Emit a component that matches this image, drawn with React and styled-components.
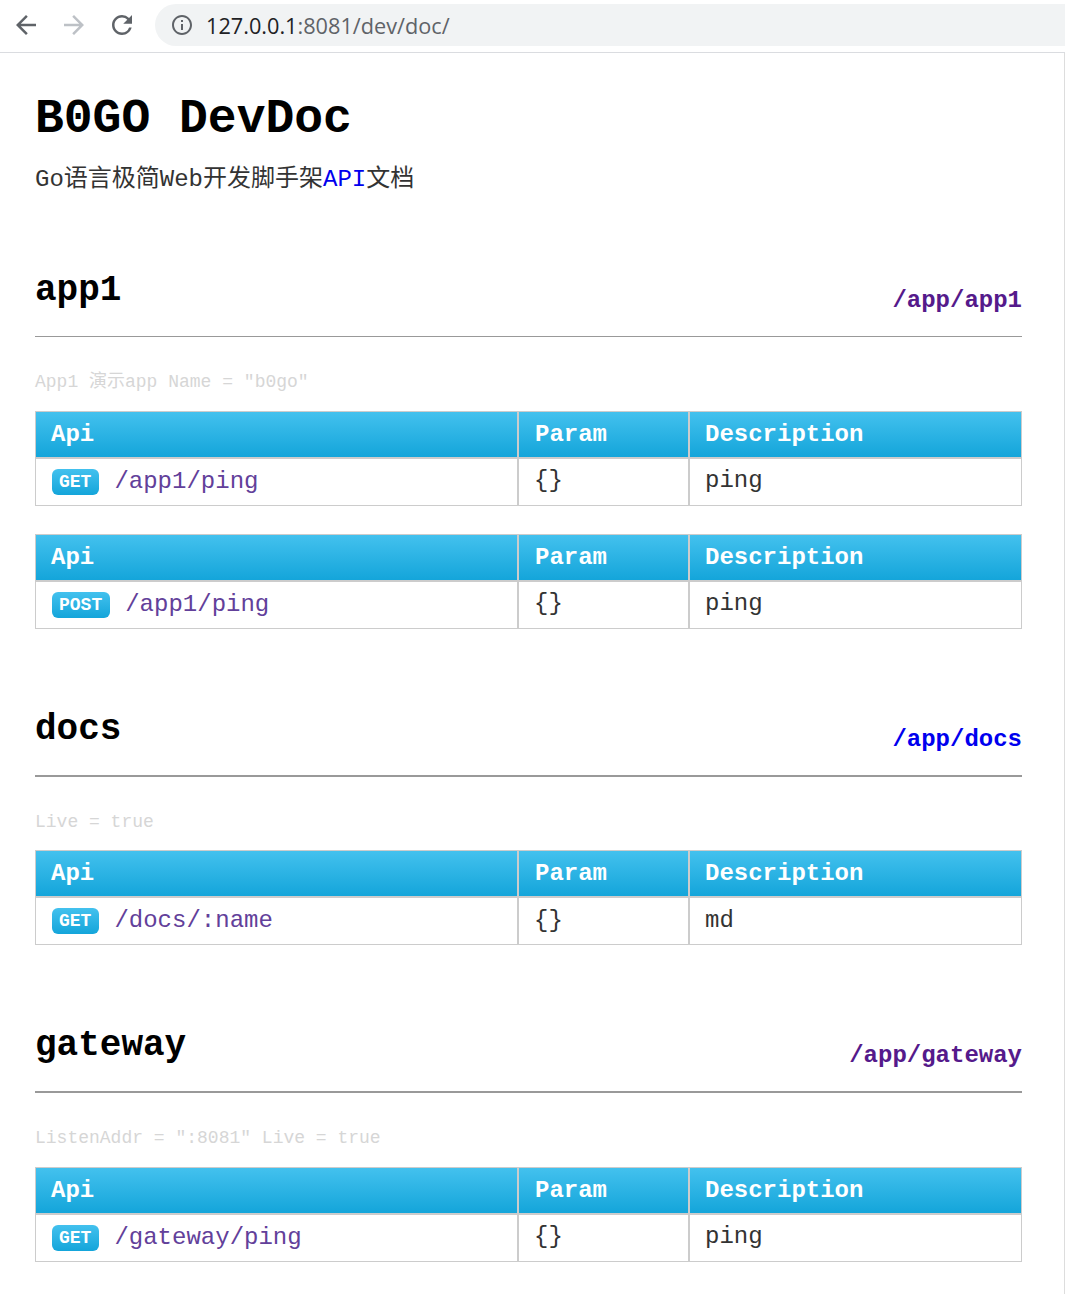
import React from "react";
import styled, { createGlobalStyle } from "styled-components";
import { MdArrowBack, MdArrowForward, MdRefresh, MdInfoOutline } from "react-icons/md";

const Global = createGlobalStyle`
html, body {
  margin: 0;
  padding: 0;
  background: #fff;
}
body {
  font-family: "Liberation Mono", "Noto Sans CJK SC", monospace;
}
`

const Toolbar = styled.header`
box-sizing: border-box;
height: 53px;
padding-top: 4px;
border-bottom: 1px solid #dadce0;
display: flex;
align-items: flex-start;
background: #fff;
`

const NavIcon = styled.span`
width: 48px;
height: 42px;
display: flex;
align-items: center;
justify-content: center;
color: ${props => props.$dim ? "#bdc1c6" : "#5f6368"};
font-size: 30px;
`

const NavGroup = styled.div`
display: flex;
padding-left: 2px;
margin-right: 9px;
`

const Omnibox = styled.div`
flex: 1;
height: 42px;
background: #f1f3f4;
border-radius: 21px 0 0 21px;
display: flex;
align-items: center;
padding-left: 15px;
gap: 12px;
color: #5f6368;
font-size: 24px;
`

const Url = styled.span`
font-family: "Open Sans", sans-serif;
font-size: 21.7px;
color: #5f6368;
b {
  font-weight: 400;
  color: #202124;
}
`

const Page = styled.main`
border-right: 1px solid #ddd;
padding: 39px 42px 32px 35px;
`

const Title = styled.h1`
margin: 0;
font-size: 48px;
line-height: 54px;
font-weight: bold;
color: #000;
`

const Subtitle = styled.p`
margin: 19px 0 75px;
font-size: 24px;
line-height: 30px;
color: #333;
a {
  color: #0000ee;
  text-decoration: none;
}
`

const Section = styled.section`
margin-bottom: 80px;
&:last-child {
  margin-bottom: 0;
}
`

const SectionHead = styled.div`
height: 66px;
border-bottom: ${props => props.$thick ? "2px" : "1px"} solid #999;
display: flex;
justify-content: space-between;
align-items: flex-end;
`

const SectionName = styled.h2`
margin: 0 0 25px;
font-size: 36px;
line-height: 40px;
font-weight: bold;
color: #000;
`

const SectionLink = styled.a`
margin: 0 0 20px;
font-size: 24px;
line-height: 30px;
font-weight: bold;
text-decoration: none;
color: ${props => props.$visited ? "#551a8b" : "#0000ee"};
`

const Note = styled.p`
margin: 33px 0 16.5px;
font-size: 18px;
line-height: 24px;
color: #d6d6d6;
`

const ApiTable = styled.table`
width: 987px;
table-layout: fixed;
border-collapse: separate;
border-spacing: 0;
border: 1px solid #ccc;
font-size: 24px;
margin-bottom: 28px;
&:last-child {
  margin-bottom: 0;
}
th {
  height: 45px;
  padding: 0 15px;
  text-align: left;
  font-weight: bold;
  color: #fff;
  background: linear-gradient(#43c1ee, #14a5da);
  border-bottom: 2px solid #ccc;
}
th:nth-child(2) {
  padding-left: 16px;
}
td {
  box-sizing: border-box;
  height: 46px;
  padding: 0 15px 2px;
  color: #333;
}
td:first-child {
  padding-bottom: 0;
}
th + th, td + td {
  border-left: 2px solid #ccc;
}
`

const Badge = styled.span`
display: inline-block;
height: 26px;
margin: 0 15px 0 1px;
padding: 0 8px 0 7px;
border-radius: 6px;
font-size: 18px;
line-height: 26px;
font-weight: bold;
vertical-align: middle;
color: #fff;
background: linear-gradient(#43c1ee, #14a5da);
`

const ApiPath = styled.a`
color: #62409a;
text-decoration: none;
vertical-align: middle;
`

const sections = [
  {
    name: "app1",
    path: "/app/app1",
    visited: true,
    note: 'App1 演示app Name = "b0go"',
    apis: [
      { method: "GET", path: "/app1/ping", desc: "ping" },
      { method: "POST", path: "/app1/ping", desc: "ping" },
    ],
  },
  {
    name: "docs",
    path: "/app/docs",
    visited: false,
    thick: true,
    note: "Live = true",
    apis: [{ method: "GET", path: "/docs/:name", desc: "md" }],
  },
  {
    name: "gateway",
    path: "/app/gateway",
    visited: true,
    thick: true,
    note: 'ListenAddr = ":8081" Live = true',
    apis: [{ method: "GET", path: "/gateway/ping", desc: "ping" }],
  },
];

function Api({ api }) {
  return (
    <ApiTable>
      <colgroup>
        <col style={{ width: 481 }} />
        <col style={{ width: 171 }} />
        <col style={{ width: 333 }} />
      </colgroup>
      <thead>
        <tr>
          <th>Api</th>
          <th>Param</th>
          <th>Description</th>
        </tr>
      </thead>
      <tbody>
        <tr>
          <td>
            <Badge>{api.method}</Badge>
            <ApiPath href="#">{api.path}</ApiPath>
          </td>
          <td>{"{}"}</td>
          <td>{api.desc}</td>
        </tr>
      </tbody>
    </ApiTable>
  );
}

export default function App() {
  return (
    <>
      <Global />
      <Toolbar>
        <NavGroup>
          <NavIcon><MdArrowBack /></NavIcon>
          <NavIcon $dim><MdArrowForward /></NavIcon>
          <NavIcon><MdRefresh /></NavIcon>
        </NavGroup>
        <Omnibox>
          <MdInfoOutline />
          <Url><b>127.0.0.1</b>:8081/dev/doc/</Url>
        </Omnibox>
      </Toolbar>
      <Page>
        <Title>B0GO DevDoc</Title>
        <Subtitle>Go语言极简Web开发脚手架<a href="#">API</a>文档</Subtitle>
        {sections.map((s) => (
          <Section key={s.name}>
            <SectionHead $thick={s.thick}>
              <SectionName>{s.name}</SectionName>
              <SectionLink href="#" $visited={s.visited}>{s.path}</SectionLink>
            </SectionHead>
            <Note>{s.note}</Note>
            {s.apis.map((api) => <Api key={api.method + api.path} api={api} />)}
          </Section>
        ))}
      </Page>
    </>
  );
}
